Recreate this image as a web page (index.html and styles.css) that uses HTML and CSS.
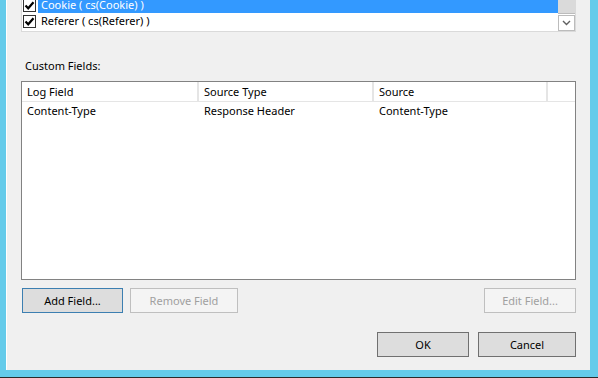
FILE: index.html
```html
<!DOCTYPE html>
<html lang="en">
<head>
    <meta charset="UTF-8">
    <title>Logging Fields</title>
    <link rel="stylesheet" href="styles.css">
</head>
<body>
    <div class="frame">
        <div class="client">
            <div class="field-list">
                <div class="rows">
                    <div class="row selected">
                        <span class="check"><svg viewBox="0 0 13 13" width="13" height="13"><path d="M2.5 6.5 L5.2 9.3 L10.5 3.2" fill="none" stroke="#000" stroke-width="2.2"/></svg></span>
                        <span class="label">Cookie ( cs(Cookie) )</span>
                    </div>
                    <div class="row">
                        <span class="check"><svg viewBox="0 0 13 13" width="13" height="13"><path d="M2.5 6.5 L5.2 9.3 L10.5 3.2" fill="none" stroke="#000" stroke-width="2.2"/></svg></span>
                        <span class="label">Referer ( cs(Referer) )</span>
                    </div>
                </div>
                <div class="scrollbar">
                    <div class="thumb"></div>
                    <div class="arrow">
                        <svg viewBox="0 0 9 6" width="9" height="6"><path d="M1 1 L4.5 4.5 L8 1" fill="none" stroke="#606060" stroke-width="1.4"/></svg>
                    </div>
                </div>
            </div>

            <p class="caption">Custom Fields:</p>

            <div class="listview">
                <div class="lv-header">
                    <div class="col">Log Field</div>
                    <div class="col">Source Type</div>
                    <div class="col">Source</div>
                    <div class="col filler"></div>
                </div>
                <div class="lv-row">
                    <div class="col">Content-Type</div>
                    <div class="col">Response Header</div>
                    <div class="col">Content-Type</div>
                </div>
            </div>

            <div class="field-buttons">
                <button type="button" class="btn default">Add Field...</button>
                <button type="button" class="btn remove" disabled>Remove Field</button>
                <button type="button" class="btn edit" disabled>Edit Field...</button>
            </div>

            <div class="dialog-buttons">
                <button type="button" class="btn ok">OK</button>
                <button type="button" class="btn cancel">Cancel</button>
            </div>
        </div>
    </div>
</body>
</html>
```

FILE: styles.css
```css
body {
    margin: 0;
    font-family: "Noto Sans", "Open Sans", sans-serif;
    font-size: 11px;
    color: #000;
}
.frame {
    width: 598px;
    height: 378px;
    box-sizing: border-box;
    background-color: #65cbea;
    padding: 0 8px 0 6px;
    border-bottom: 1px solid #2b2b2b;
}
.client {
    height: 370px;
    box-sizing: border-box;
    background-color: #f0f0f0;
    border-left: 1px solid #ffffff;
    padding: 0 14px 0 14px;
}
.field-list {
    display: grid;
    grid-template-columns: 1fr 17px;
    height: 32px;
    width: 555px;
    box-sizing: border-box;
    background-color: #fff;
    border: 1px solid #dadada;
    border-top: none;
}
.rows {
    display: flex;
    flex-direction: column;
    justify-content: flex-end;
    overflow: hidden;
    padding-bottom: 2px;
}
.row {
    display: flex;
    align-items: center;
    height: 16px;
    flex-shrink: 0;
}
.check {
    width: 13px;
    height: 13px;
    margin: 0 2px 0 1px;
    box-sizing: border-box;
    background: #fff;
    border: 1px solid #333;
    display: flex;
}
.check svg {
    margin: -1px;
}
.label {
    flex: 1;
    padding-left: 3px;
    line-height: 16px;
}
.row.selected .label {
    background-color: #3399ff;
    color: #fff;
}
.scrollbar {
    display: flex;
    flex-direction: column;
}
.thumb {
    height: 13px;
    background-color: #dadada;
    border-bottom: 1px solid #bcbcbc;
}
.arrow {
    flex: 1;
    margin-top: 1px;
    border: 1px solid #bcbcbc;
    background: #fff;
    display: flex;
    align-items: center;
    justify-content: center;
}
.caption {
    margin: 26px 0 0 4px;
    line-height: 16px;
}
.listview {
    margin-top: 7px;
    width: 555px;
    height: 199px;
    box-sizing: border-box;
    background: #fff;
    border: 1px solid #828282;
}
.lv-header,
.lv-row {
    display: grid;
    grid-template-columns: 177px 175px 174px 1fr;
}
.lv-header {
    height: 19px;
    border-bottom: 1px solid #e5e5e5;
}
.lv-header .col {
    border-right: 2px solid #e5e5e5;
    line-height: 19px;
    padding-left: 5px;
}
.lv-header .filler {
    border-right: none;
}
.lv-row .col {
    padding-left: 5px;
    line-height: 18px;
}
.field-buttons {
    display: flex;
    margin-top: 8px;
    width: 555px;
}
.btn {
    font-family: inherit;
    font-size: 11px;
    height: 25px;
    box-sizing: border-box;
    border: 1px solid #adadad;
    background-color: #e1e1e1;
    color: #000;
    padding: 0;
}
.btn.default {
    margin-left: 1px;
    width: 101px;
    border-color: #3c7fb1;
    background-color: #dddddd;
}
.btn[disabled] {
    background-color: #f4f4f4;
    border-color: #bfbfbf;
    color: #a0a0a0;
}
.btn.remove {
    margin-left: 7px;
    width: 108px;
}
.btn.edit {
    margin-left: auto;
    width: 92px;
}
.dialog-buttons {
    display: flex;
    justify-content: flex-end;
    gap: 9px;
    width: 555px;
    margin-top: 19px;
}
.btn.ok,
.btn.cancel {
    border-color: #707070;
    background-color: #dddddd;
}
.btn.ok {
    width: 92px;
}
.btn.cancel {
    width: 98px;
}
```
